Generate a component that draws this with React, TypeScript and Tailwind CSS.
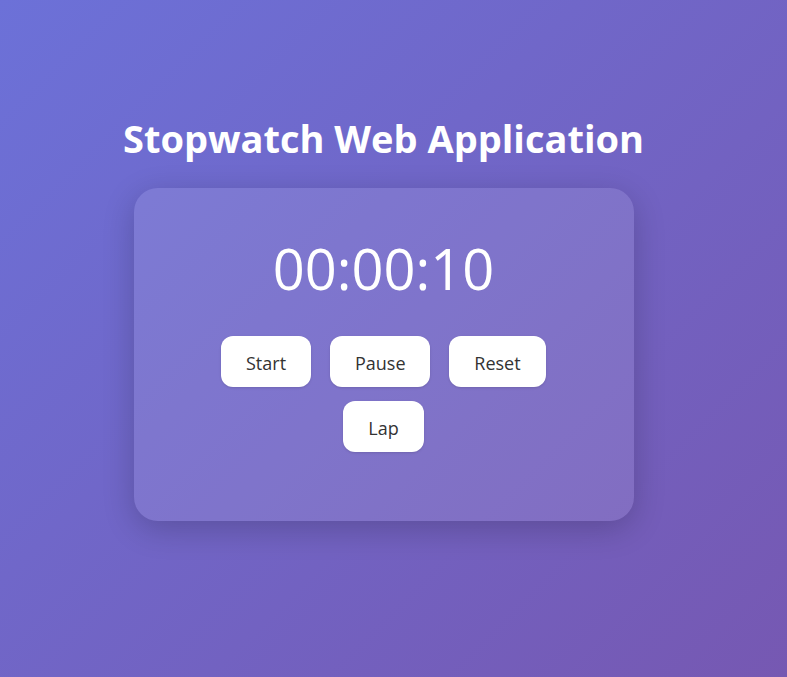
const buttonClass =
  'h-[51px] rounded-[12px] bg-white px-[25px] pt-[4px] text-[18px] text-[#333] shadow-sm';

export default function App() {
  return (
    <div
      className="min-h-[677px] w-full bg-[linear-gradient(135deg,#6c71d8_0%,#7658b2_100%)] text-white"
      style={{ fontFamily: '"Open Sans", "Noto Sans", sans-serif' }}
    >
      <div className="flex flex-col items-center pt-[112px] pr-[20px]">
        <h1 className="text-[38px] leading-[52px] font-bold">Stopwatch Web Application</h1>

        <div className="mt-[24px] flex h-[333px] w-[500px] flex-col items-center rounded-[24px] bg-white/10 pt-[40px] shadow-[0_8px_32px_rgba(0,0,0,0.2)]">
          <div className="text-[56px] leading-[80px] font-normal">00:00:10</div>

          <div className="mt-[28px] flex gap-[19px]">
            <button className={`${buttonClass} w-[90px]`}>Start</button>
            <button className={`${buttonClass} w-[100px]`}>Pause</button>
            <button className={`${buttonClass} w-[97px]`}>Reset</button>
          </div>
          <div className="mt-[14px] flex">
            <button className={`${buttonClass} w-[81px]`}>Lap</button>
          </div>
        </div>
      </div>
    </div>
  );
}
